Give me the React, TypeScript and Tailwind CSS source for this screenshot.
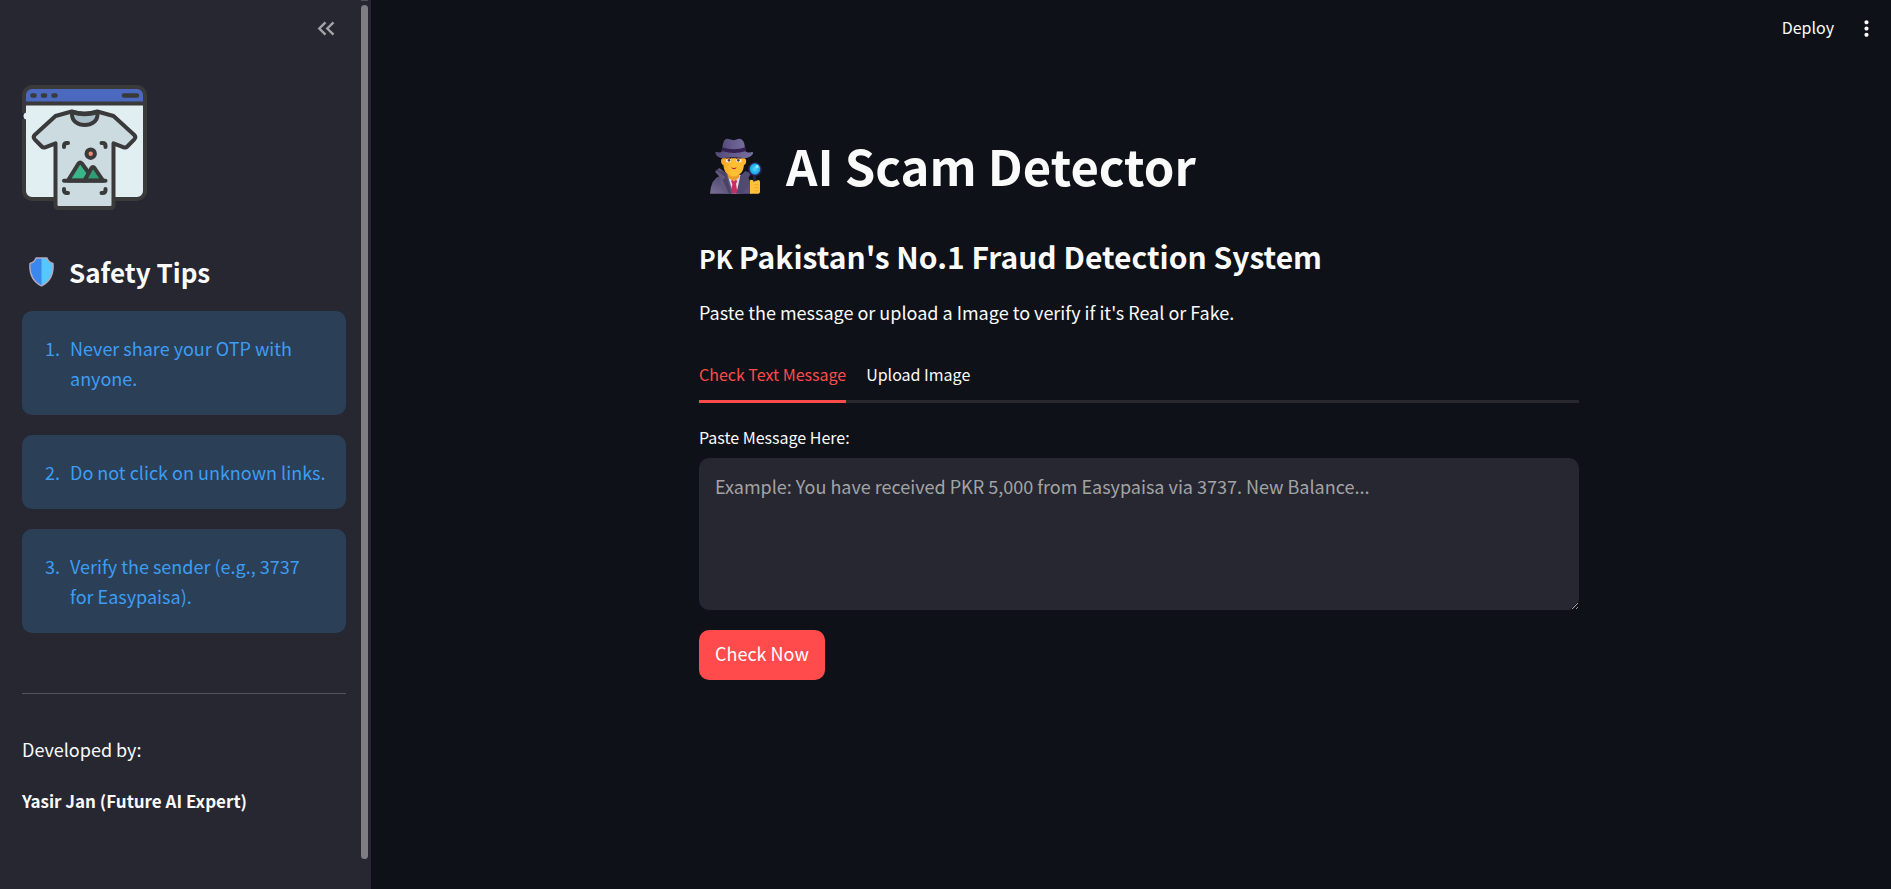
import { useState } from 'react'
import { MdMoreVert } from 'react-icons/md'

const tips = [
  'Never share your OTP with anyone.',
  'Do not click on unknown links.',
  'Verify the sender (e.g., 3737 for Easypaisa).',
]

const tabs = ['Check Text Message', 'Upload Image']

function ShirtLogo() {
  return (
    <svg viewBox="0 0 125 125" className="size-[125px]" role="img" aria-label="Logo">
      <rect x="2" y="2" width="121" height="112" rx="8" fill="#e1eff3" />
      <path d="M2 18V10a8 8 0 0 1 8-8h105a8 8 0 0 1 8 8v8z" fill="#4b69bf" />
      <g fill="none" stroke="#3a3a3a" strokeWidth="4" strokeLinecap="round" strokeLinejoin="round">
        <rect x="2" y="2" width="121" height="112" rx="8" />
        <path d="M2 18.500h121" />
        <path d="M10.500 10.500h2M21 10.500h2M31.500 10.500h2M102 10.500h13" strokeWidth="4.600" />
      </g>
      <path d="M-1 28h3v6h-3z" fill="#262730" />
      <path d="M5 27.500a3.500 3.500 0 0 0 0 7z" fill="#e1eff3" />
      <path
        d="M49.700 26.500 33.500 31 12.700 50q-2 2 0 4.300l7 7.200q1.500 1.500 3.500.8l10.300-4V120q0 3 3 3h52q3 0 3-3V58.300l10.300 4q2 .7 3.500-.8l7-7.200q2-2.300 0-4.300L91.500 31 75.300 26.500q-12.800 4-25.600 0z"
        fill="#cbdbe0"
        stroke="#3a3a3a"
        strokeWidth="4"
        strokeLinejoin="round"
      />
      <path
        d="M50 27q12.500 4.500 25.500 0v2.500c0 14-25.500 14-25.500 0z"
        fill="#a9c0ca"
        stroke="#3a3a3a"
        strokeWidth="4"
        strokeLinejoin="round"
      />
      <g fill="none" stroke="#3a3a3a" strokeWidth="4" strokeLinecap="round">
        <path d="M42 62v-1q0-3 3-3h1M79.500 58h1q3 0 3 3v1M42 104v1q0 3 3 3h1M79.500 108h1q3 0 3-3v-1" />
      </g>
      <circle cx="68.700" cy="68.700" r="4.200" fill="#f58a72" stroke="#3a3a3a" strokeWidth="4" />
      <g stroke="#3a3a3a" strokeWidth="4" strokeLinecap="round" strokeLinejoin="round">
        <path d="m46 95.500 10.500-17q1.700-2 3.400 0l8 11-4 6z" fill="#39b58a" />
        <path d="m62.500 95.500 7-12.500q1.500-2 3 0l8.500 12.500z" fill="#2f9e75" />
        <path d="M42 95.700h41.500" />
      </g>
    </svg>
  )
}

function DoubleArrowLeft() {
  return (
    <svg viewBox="0 0 25 25" className="size-[25px]" fill="none" stroke="currentColor" strokeWidth="2.400" aria-hidden="true">
      <path d="m12.500 6.300-6.200 6.200 6.200 6.200M20.500 6.300l-6.200 6.200 6.200 6.200" />
    </svg>
  )
}

function Shield() {
  return (
    <svg viewBox="0 0 25 30" className="h-[30px] w-[25px]" aria-hidden="true">
      <path
        d="M7 1h11c1 3 3 4.800 6 5.300.8 9-1 17.200-11.500 22.700C2 23.500.2 15.300 1 6.300 4 5.800 6 4 7 1z"
        fill="#54c7ff"
      />
      <path d="M12.500 1H7C6 4 4 5.800 1 6.300.2 15.300 2 23.500 12.500 29z" fill="#3a87f0" />
      <path
        d="M7 1h11c1 3 3 4.800 6 5.300.8 9-1 17.200-11.500 22.700C2 23.500.2 15.300 1 6.300 4 5.800 6 4 7 1z"
        fill="none"
        stroke="#b3a9bd"
        strokeWidth="1.300"
        strokeLinejoin="round"
      />
    </svg>
  )
}

function Detective() {
  return (
    <svg viewBox="27 20 159 171" className="h-[57px] w-[53px]" aria-hidden="true">
      <defs>
        <linearGradient id="coat" x1="0" x2="1" y1="1" y2="0">
          <stop offset="0" stopColor="#7c6f96" />
          <stop offset="0.4" stopColor="#5a547a" />
          <stop offset="1" stopColor="#4d4668" />
        </linearGradient>
        <linearGradient id="hat" x1="0" x2="1">
          <stop offset="0" stopColor="#54497a" />
          <stop offset="1" stopColor="#7770a0" />
        </linearGradient>
        <linearGradient id="skin" x1="0" x2="1">
          <stop offset="0" stopColor="#f5a22a" />
          <stop offset="0.5" stopColor="#ffc233" />
          <stop offset="1" stopColor="#ffb52c" />
        </linearGradient>
        <radialGradient id="lens">
          <stop offset="0" stopColor="#52d6ff" />
          <stop offset="1" stopColor="#149ee8" />
        </radialGradient>
      </defs>
      <path d="M30 190q2-44 30-54l40-8 38 8q16 6 17 54z" fill="url(#coat)" />
      <path d="M82 134h40l-6 56H91z" fill="#e3dbe7" />
      <path d="m97 148 5 5 5-5 5 4-4 9 5 29H92l5-29-4-9z" fill="#c92d60" />
      <path d="M82 120h36v20q-8 10-17 11-11-2-19-11z" fill="#ee9a2a" />
      <path d="m58 113 24 18 18 59H73l-14-36 6-8-20-22z" fill="#61597f" />
      <path d="m136 122 18 7-11 17 6 6-18 38h-22l12-54z" fill="#504a72" />
      <path d="m45 117 33 10 16 63H87L68 149l9-8z" fill="#4a4265" />
      <path d="M67 84q-6 4-3 14 2 6 6 6 2 22 14 28 17 13 34 0 12-6 14-28 5-1 6-7 2-10-4-13z" fill="url(#skin)" />
      <path d="M78 84q8-4 15 1M108 85q7-5 15-1" stroke="#7b3d2b" strokeWidth="3" fill="none" />
      <path d="M78 87h15v7q-8 4-15 0zM109 87h15v7q-8 4-15 0z" fill="#fff2e2" />
      <circle cx="87" cy="90" r="4" fill="#5f3a35" />
      <circle cx="115" cy="90" r="4" fill="#5f3a35" />
      <path d="M93 111q8 4 17 0-2 6-8 6t-9-6z" fill="#bc1f50" />
      <path d="M62 79 69 40q4-17 17-14l16 4 14-5q12-1 17 15l6 39z" fill="url(#hat)" />
      <path d="M67 51q35 12 69 0l5 24q-39 14-79 0z" fill="#34214f" />
      <path d="M46 68q-1-4 5-3 12 3 17-2 35 10 68 0 7 6 19 2 6-1 4 5-9 13-27 14-15-3-31-3-16 0-34 3-18-3-21-16z" fill="url(#hat)" />
      <path d="m163 132 1 28" stroke="#292241" strokeWidth="9" strokeLinecap="round" />
      <ellipse cx="165" cy="117" rx="21" ry="21" fill="#27214a" />
      <ellipse cx="165" cy="116" rx="16" ry="17" fill="url(#lens)" />
      <circle cx="171" cy="109" r="5" fill="#8ce9ff" />
      <path d="M150 150q8-5 11 4l14-5q5 0 5 6v29q0 6-6 6h-24z" fill="#ffc13a" />
      <path d="M163 163h13M163 172h13M163 181h13" stroke="#f19b2c" strokeWidth="2" />
    </svg>
  )
}

function Sidebar() {
  return (
    <aside className="flex w-[371px] shrink-0 bg-[#262730] pl-[22px]">
      <div className="min-w-0 flex-1">
        <div className="flex h-14 items-center justify-end pr-2">
          <button type="button" aria-label="Collapse sidebar" className="text-[#a3a3a8]">
            <DoubleArrowLeft />
          </button>
        </div>
        <div className="pt-[29px] pb-16">
          <ShirtLogo />
          <h2 className="mt-11 flex items-center gap-[15px] pl-[7px] text-[26px] leading-9 font-semibold">
            <Shield />
            Safety Tips
          </h2>
          <div className="mt-[21px] flex flex-col gap-5">
            {tips.map((tip, i) => (
              <div key={tip} className="rounded-[10px] bg-[#2b3f57] py-[22px] pr-5 pl-[42px] text-[#3d9df3]">
                <ol start={i + 1} className="list-decimal">
                  <li className="pl-1.5">{tip}</li>
                </ol>
              </div>
            ))}
          </div>
          <hr className="mt-[60px] border-[#52535b]" />
          <p className="mt-10">Developed by:</p>
          <p className="mt-[22px] text-[17px] font-semibold">Yasir Jan (Future AI Expert)</p>
        </div>
      </div>
      {/* scroll track */}
      <div className="mr-[3px] ml-[15px] flex w-[7px] flex-col gap-1 pb-[30px]">
        <div className="h-px bg-[#4e4f57]" />
        <div className="flex-1 rounded-full bg-[#7d7d83]" />
      </div>
    </aside>
  )
}

export default function App() {
  const [active, setActive] = useState(tabs[0])
  const [message, setMessage] = useState('')

  return (
    <div className="flex min-h-screen bg-[#0e1117] font-['Source_Sans_Pro','Noto_Sans_CJK_SC',sans-serif] text-[18px] leading-[30px] text-[#fafafa]">
      <Sidebar />
      <div className="flex min-w-0 flex-1 flex-col">
        <header className="flex h-14 items-center justify-end gap-5 pr-3">
          <button type="button" className="pb-0.5 text-[16px]">
            Deploy
          </button>
          <button type="button" aria-label="Main menu">
            <MdMoreVert size={25} />
          </button>
        </header>
        <main className="w-full pt-[76px] pl-4">
          <div className="mx-auto max-w-[880px]">
            <h1 className="flex items-center gap-6 pl-[10px] text-[49px] leading-[66px] font-bold">
              <Detective />
              AI Scam Detector
            </h1>
            <h3 className="mt-[37px] text-[30px] leading-[42px] font-semibold">
              <span className="mr-1.5 text-[25px] leading-none">PK</span>
              Pakistan's No.1 Fraud Detection System
            </h3>
            <p className="mt-5">Paste the message or upload a Image to verify if it's Real or Fake.</p>
            <div role="tablist" className="mt-[23px] flex gap-5 text-[16px] shadow-[inset_0_-3px_0_#28292e]">
              {tabs.map((tab) => (
                <button
                  key={tab}
                  type="button"
                  role="tab"
                  aria-selected={tab === active}
                  onClick={() => setActive(tab)}
                  className={
                    tab === active
                      ? 'h-[53px] border-b-3 border-[#ff4b4b] pb-0.5 text-[#ff4b4b]'
                      : 'h-[53px] border-b-3 border-transparent pb-0.5'
                  }
                >
                  {tab}
                </button>
              ))}
            </div>
            <label htmlFor="message" className="mt-[22px] block text-[16px] leading-6">
              Paste Message Here:
            </label>
            <textarea
              id="message"
              value={message}
              onChange={(e) => setMessage(e.target.value)}
              placeholder="Example: You have received PKR 5,000 from Easypaisa via 3737. New Balance..."
              className="mt-[9px] block h-[152px] w-full resize-y rounded-[10px] bg-[#262730] px-4 py-[13px] placeholder:text-[#a3a3a6]"
            />
            <button type="button" className="mt-5 h-[50px] rounded-[10px] bg-[#ff4b4b] px-4 pb-1 text-white">
              Check Now
            </button>
          </div>
        </main>
      </div>
    </div>
  )
}
